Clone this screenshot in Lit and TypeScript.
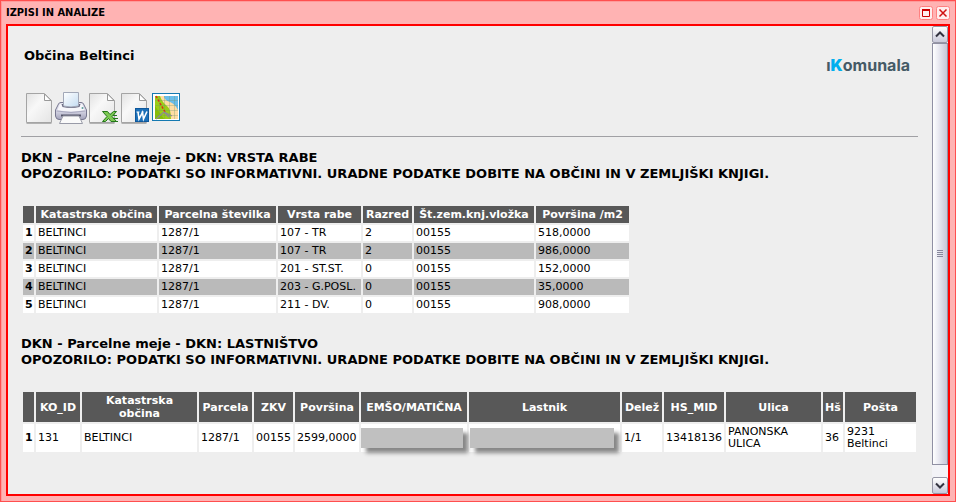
import { LitElement, html, css, svg } from "lit";
import { customElement } from "lit/decorators.js";

const LAND_COLS = [11, 121, 117, 83, 49, 120, 93];
const LAND_HEAD = ["Katastrska občina", "Parcelna številka", "Vrsta rabe", "Razred", "Št.zem.knj.vložka", "Površina /m2"];
const LAND_ROWS = [
  ["BELTINCI", "1287/1", "107 - TR", "2", "00155", "518,0000"],
  ["BELTINCI", "1287/1", "107 - TR", "2", "00155", "986,0000"],
  ["BELTINCI", "1287/1", "201 - ST.ST.", "0", "00155", "152,0000"],
  ["BELTINCI", "1287/1", "203 - G.POSL.", "0", "00155", "35,0000"],
  ["BELTINCI", "1287/1", "211 - DV.", "0", "00155", "908,0000"],
];

// A width of 0 lets the column take the space that is left.
const OWNER_COLS = [11, 44, 115, 53, 39, 64, 106, 0, 40, 60, 95, 20, 71];
const OWNER_HEAD = ["KO_ID", "Katastrska občina", "Parcela", "ZKV", "Površina", "EMŠO/MATIČNA", "Lastnik", "Delež", "HS_MID", "Ulica", "Hš", "Pošta"];

const sheet = (w: number) => svg`
  <path d="M${w - 26} 1.500H${w - 8}L${w - 1} 8.500V30.500H${w - 26}Z" fill="url(#paper)" stroke="#a4a4a4"/>
  <path d="M${w - 8} 2V8.500H${w - 1.5}Z" fill="#fff" stroke="#999"/>
  <path d="M${w - 26} 31.500H${w - 1}" stroke="#8a8a8a" opacity=".6"/>`;

const paper = svg`<defs><linearGradient id="paper" x1="0" y1="0" x2="1" y2="1">
  <stop offset="0" stop-color="#e2e2e2"/><stop offset=".4" stop-color="#f8f8f8"/><stop offset="1" stop-color="#e4e4e4"/>
  </linearGradient></defs>`;

const ICONS = [
  { label: "Nov izpis", art: svg`${paper}${sheet(29.5)}` },
  {
    label: "Natisni",
    art: svg`<defs><linearGradient id="body" x1="0" y1="0" x2="0" y2="1">
        <stop offset="0" stop-color="#e6e6f0"/><stop offset=".5" stop-color="#d5d5e4"/><stop offset="1" stop-color="#a3a3bb"/></linearGradient>
      <linearGradient id="feed" x1="0" y1="0" x2="1" y2="1"><stop offset="0" stop-color="#fff"/><stop offset="1" stop-color="#c4dcf2"/></linearGradient></defs>
      <path d="M3.500 12Q4 10.500 6 10.500H26Q28 10.500 28.500 12L31.500 18V24Q31 27.500 28 27.500H4Q1 27.500 .5 24V18Z" fill="url(#body)" stroke="#77778f"/>
      <path d="M5 12H27L29.500 18Q16 21 2.500 18Z" fill="#f6f6fa"/>
      <path d="M6.500 12H25.500L24.500 15Q16 17 7.500 15Z" fill="#6b6b83"/>
      <path d="M8.500 .5H23.500V14Q16 16 8.500 14Z" fill="url(#feed)" stroke="#a2a8b8"/>
      <path d="M1.500 19Q16 22 30.500 19" stroke="#a9a9c0"/>
      <path d="M6 23.500H26" stroke="#555568" stroke-width="2"/>
      <path d="M8 24H24L27.500 31.500H4.500Z" fill="#fafafa" stroke="#999ba8"/>
      <circle cx="27.500" cy="16" r="1" fill="#5d9e9a"/>`,
  },
  {
    label: "Izvoz v Excel",
    art: svg`${paper}${sheet(28.5)}
      <path d="M15.500 19.500H20.500L23 22.500L26.500 19.500H29.500L25 24.500L29.500 29.500H24L21.500 26.500L18.500 29.500H15.500L20 24.500Z" fill="#7cc852" stroke="#24781a"/>
      <path d="M26 23.500H30M26 26.500H31M28 29.500H31" stroke="#24781a"/>`,
  },
  {
    label: "Izvoz v Word",
    art: svg`${paper}${sheet(28.5)}
      <rect x="16.500" y="16.500" width="13" height="13" fill="#1c70b8" stroke="#0d579c"/>
      <path d="M17.500 20H20.500M22.500 20H24.500" stroke="#fff"/>
      <path d="M19 20L20 27L23.500 20.500L24.500 27L28 19.500" fill="none" stroke="#fff" stroke-width="1.600"/>`,
  },
  {
    label: "Zemljevid",
    art: svg`<rect x="1.500" y="1.500" width="27" height="27" fill="#fff" stroke="#1579b1"/>
      <path d="M4 4H27V27H4Z" fill="#ffdda4"/>
      <path d="M13 4H27V18Q24 12 19 10Q13 8 13 4Z" fill="#69bdea"/>
      <path d="M4 4H9Q11 10 16 14Q20 17 20 27H4Z" fill="#9bcd17"/>
      <path d="M4 14L13 27H4Z" fill="#86bd08"/>
      <path d="M4 8.500H27M4 13.500H27M4 18.500H27M4 23.500H27M8.500 4V27M13.500 4V27M18.500 4V27M23.500 4V27" stroke="#70966b" stroke-width=".7" opacity=".45"/>
      <path d="M5 4L14 20" stroke="#e02a18" stroke-width="1.400" stroke-dasharray="2.500 1.500"/>
      <path d="M5 27L13 20L18 25M13 20L21 24" stroke="#8c8c91" stroke-width="1.200" fill="none"/>`,
  },
];

@customElement("app-root")
export class AppRoot extends LitElement {
  static styles = css`
    :host {
      display: flex;
      flex-direction: column;
      box-sizing: border-box;
      min-height: 100vh;
      border: 1px solid #ff4f4f;
      background: #ffb3b3;
      box-shadow: inset 1px 1px #ff9a9a;
      padding: 0 5px 5px;
      font-family: "DejaVu Sans", Verdana, sans-serif;
      font-size: 11px;
      color: #000;
    }
    button { padding: 0; margin: 0; border: 0; background: none; display: block; }
    svg { display: block; }
    .bar { display: flex; align-items: center; height: 23px; gap: 3px; }
    .bar h1 {
      flex: 1;
      margin: 0;
      font: bold 11px/23px "DejaVu Sans Condensed", "DejaVu Sans", Tahoma, sans-serif;
    }
    .tool { width: 14px; height: 14px; }
    .frame { flex: 1; display: flex; border: 2px solid #f00; background: #eee; }
    .page { flex: 1; min-width: 0; padding: 20px 14px 0 13px; }
    .top { display: flex; justify-content: space-between; padding: 0 8px 0 3px; height: 46px; }
    .top h2 { margin: 0; font-size: 13px; line-height: 20px; }
    .logo { font: 700 16px/38px Inter, sans-serif; color: #455a66; }
    .logo b { color: #00aeef; }
    .icons { display: flex; padding: 0 2px; }
    hr { margin: 12px 0 13px; border: 0; height: 1px; background: #a0a0a4; }
    h3 { margin: 0 0 22px; font-size: 13px; line-height: 16px; }
    table { table-layout: fixed; border-spacing: 2px; }
    .land { width: 610px; margin-bottom: 21px; }
    .owner { width: 100%; }
    th, td { padding: 0 2px; height: 16px; line-height: 12px; box-sizing: border-box; white-space: nowrap; }
    td { background: #fff; text-align: left; }
    thead th, thead td { background: #585858; color: #fff; font-size: 11px; line-height: 13px; height: 17px; text-align: center; padding: 0; }
    tbody th { background: #fff; }
    .land tbody tr:nth-child(even) > * { background: #bababa; }
    .owner thead > tr > * { height: 30px; white-space: normal; }
    .owner thead th:nth-child(3) { padding: 0 8px; }
    .owner tbody > tr > * { height: 28px; }
    .owner .hidden { padding: 0; }
    .mask { height: 20px; margin-right: 4px; background: #c0c0c0; box-shadow: 5px 5px 4px #888; position: relative; }
    .hidden + .hidden .mask { margin: 0 6px 0 1px; }
    .scroll { width: 16px; display: flex; flex-direction: column; background: #f3f3f7; }
    .step {
      width: 16px; height: 17px; box-sizing: border-box; border: 1px solid #9797a6; border-radius: 2px;
      background: linear-gradient(#fff, #c9c9da);
    }
    .thumb {
      flex: 1; display: flex; align-items: center; justify-content: center; margin-bottom: 12px;
      border: 1px solid #9090a3; background: linear-gradient(90deg, #fff, #e9e9f1 40%, #c6c6d7);
    }
  `;

  private cols(widths: number[]) {
    return html`<colgroup>${widths.map((w) => (w ? html`<col style="width:${w}px">` : html`<col>`))}</colgroup>`;
  }

  private head(names: string[]) {
    return html`<thead><tr><td></td>${names.map((n) => html`<th scope="col">${n}</th>`)}</tr></thead>`;
  }

  private heading(name: string) {
    return html`<h3>DKN - Parcelne meje - DKN: ${name}<br>OPOZORILO: PODATKI SO INFORMATIVNI. URADNE PODATKE DOBITE NA OBČINI IN V ZEMLJIŠKI KNJIGI.</h3>`;
  }

  render() {
    return html`
      <header class="bar">
        <h1>IZPISI IN ANALIZE</h1>
        <button class="tool" aria-label="Povečaj"><svg width="14" height="14" fill="none">
          <rect x=".5" y=".5" width="13" height="13" rx="2" fill="#ffeded" stroke="#ff8080"/>
          <path d="M3.500 4.500H10.500V10.500H3.500Z" stroke="#c00"/><path d="M3 4H11" stroke="#c00" stroke-width="2"/></svg></button>
        <button class="tool" aria-label="Zapri"><svg width="14" height="14" fill="none">
          <rect x=".5" y=".5" width="13" height="13" rx="2" fill="#ffeded" stroke="#ff8080"/>
          <path d="M3.500 3.500L10.500 10.500M10.500 3.500L3.500 10.500" stroke="#d01010" stroke-width="1.500"/></svg></button>
      </header>
      <div class="frame">
        <main class="page">
          <div class="top"><h2>Občina Beltinci</h2><div class="logo">ı<b>K</b>omunala</div></div>
          <nav class="icons">
            ${ICONS.map((i) => html`<button aria-label=${i.label}><svg width="32" height="32" fill="none">${i.art}</svg></button>`)}
          </nav>
          <hr>
          ${this.heading("VRSTA RABE")}
          <table class="land">
            ${this.cols(LAND_COLS)}${this.head(LAND_HEAD)}
            <tbody>${LAND_ROWS.map((r, i) => html`<tr><th scope="row">${i + 1}</th>${r.map((c) => html`<td>${c}</td>`)}</tr>`)}</tbody>
          </table>
          ${this.heading("LASTNIŠTVO")}
          <table class="owner">
            ${this.cols(OWNER_COLS)}${this.head(OWNER_HEAD)}
            <tbody><tr>
              <th scope="row">1</th><td>131</td><td>BELTINCI</td><td>1287/1</td><td>00155</td><td>2599,0000</td>
              <td class="hidden"><div class="mask"></div></td><td class="hidden"><div class="mask"></div></td>
              <td>1/1</td><td>13418136</td><td>PANONSKA<br>ULICA</td><td>36</td><td>9231<br>Beltinci</td>
            </tr></tbody>
          </table>
        </main>
        <div class="scroll">
          <button class="step" aria-label="Gor"><svg width="14" height="15" fill="none"><path d="M3 9.500L7 5.500L11 9.500" stroke="#333340" stroke-width="2"/></svg></button>
          <div class="thumb"><svg width="6" height="8"><path d="M0 .5H6M0 2.500H6M0 4.500H6M0 6.500H6" stroke="#88889c"/></svg></div>
          <button class="step" aria-label="Dol"><svg width="14" height="15" fill="none"><path d="M3 5.500L7 9.500L11 5.500" stroke="#333340" stroke-width="2"/></svg></button>
        </div>
      </div>
    `;
  }
}
